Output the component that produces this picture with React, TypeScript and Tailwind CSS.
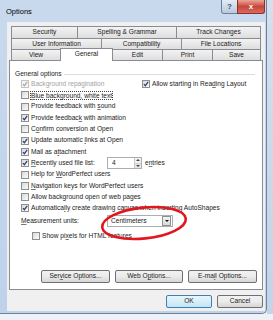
import React from "react";

function Check({ checked, disabled }: { checked?: boolean; disabled?: boolean }) {
  return (
    <span
      className={`flex h-[8px] w-[8px] shrink-0 items-center justify-center border ${
        disabled
          ? "border-[#c4c4c4] bg-[#f4f4f4]"
          : "border-[#8e8f8f] bg-gradient-to-br from-[#d9d9d9] to-[#fbfbfb]"
      }`}
    >
      {checked && (
        <svg viewBox="0 0 6 6" className="h-[6px] w-[6px]">
          <path
            d="M0.9 3.1 L2.4 4.7 L5.2 0.9"
            fill="none"
            stroke={disabled ? "#a8a8a8" : "#2b3d7a"}
            strokeWidth="1.2"
          />
        </svg>
      )}
    </span>
  );
}

function Row({
  checked,
  disabled,
  children,
}: {
  checked?: boolean;
  disabled?: boolean;
  children: React.ReactNode;
}) {
  return (
    <div className="flex h-[11.3px] items-center">
      <Check checked={checked} disabled={disabled} />
      <span className={`ml-[2px] whitespace-nowrap ${disabled ? "text-[#a3a3a3]" : ""}`}>
        {children}
      </span>
    </div>
  );
}

// access-key letter
function K({ children }: { children: React.ReactNode }) {
  return <span className="underline decoration-[#777]">{children}</span>;
}

function Tab({ w, label }: { w: string; label: string }) {
  return (
    <div
      className={`${w} -ml-px flex h-full items-center justify-center border border-[#898c95] bg-gradient-to-b from-[#f3f3f3] to-[#dedede] first:ml-0`}
    >
      {label}
    </div>
  );
}

function Btn({ w, children, primary }: { w: string; children: React.ReactNode; primary?: boolean }) {
  return (
    <div
      className={`${w} flex h-[13px] items-center justify-center rounded-[2px] border ${
        primary
          ? "border-[#3c7fb1] bg-gradient-to-b from-[#eaf6fd] to-[#c4e5f6]"
          : "border-[#707070] bg-gradient-to-b from-[#f2f2f2] via-[#ebebeb] to-[#d6d6d6]"
      }`}
    >
      {children}
    </div>
  );
}

export default function App() {
  return (
    <div className="relative flex h-[320px] w-[273px] overflow-hidden bg-[#eef2f6] font-['Liberation_Sans',Arial,sans-serif] text-[6.6px] leading-none text-[#222]">
      {/* Dialog window */}
      <div className="flex h-[314px] w-[267px] shrink-0 flex-col rounded-br-[5px] border-r border-b border-[#71839a] bg-gradient-to-b from-[#c9d9ed] to-[#bed2ea] pb-[2px]">
        {/* Title bar */}
        <div className="flex h-[22px] shrink-0 items-start">
          <span className="pl-[6px] pt-[8px] text-[7.5px] text-black">Options</span>
          <div className="ml-auto mr-[1px] flex">
            <div className="flex h-[14px] w-[17px] items-center justify-center rounded-bl-[3px] border border-t-0 border-[#6f8098] bg-gradient-to-b from-[#e4ecf5] to-[#b8cadf] text-[8px] font-bold text-[#3d4f68]">
              ?
            </div>
            <div className="-ml-px flex h-[14px] w-[28px] items-center justify-center rounded-br-[3px] border border-t-0 border-[#8b3129] bg-gradient-to-b from-[#e9a598] via-[#c8463b] to-[#d66b5d] text-[8px] font-bold text-white">
              x
            </div>
          </div>
        </div>

        {/* Client area */}
        <div className="flex flex-1 flex-col pl-[7px] pr-[1px]">
          <div className="flex flex-1 flex-col bg-[#f0f0f0] pt-[4px] pb-[3px]">
            {/* Tabs */}
            <div className="pl-[4px]">
              <div className="flex h-[13px]">
                <Tab w="w-[67px]" label="Security" />
                <Tab w="w-[100px]" label="Spelling & Grammar" />
                <Tab w="w-[85px]" label="Track Changes" />
              </div>
              <div className="-mt-px flex h-[12px]">
                <Tab w="w-[91px]" label="User Information" />
                <Tab w="w-[81px]" label="Compatibility" />
                <Tab w="w-[80px]" label="File Locations" />
              </div>
              <div className="relative z-10 -mt-px -mb-px flex h-[12px] items-start">
                <Tab w="w-[50px]" label="View" />
                <div className="-mt-px -ml-px flex h-[13px] w-[53px] items-center justify-center border border-b-0 border-[#898c95] bg-white pb-[1px]">
                  General
                </div>
                <Tab w="w-[51px]" label="Edit" />
                <Tab w="w-[51px]" label="Print" />
                <Tab w="w-[49px]" label="Save" />
              </div>
            </div>

            {/* Panel */}
            <div className="mx-[2px] flex h-[230px] flex-col border border-[#898c95] bg-white">
              <div className="mt-[8.5px] flex h-[9px] items-center pl-[5px] pr-[7px]">
                <span className="whitespace-nowrap">General options</span>
                <div className="ml-[2px] h-px flex-1 bg-[#d5dfe5]" />
              </div>

              <div className="pl-[11px]">
                <div className="flex h-[11.3px] items-center">
                  <div className="flex w-[121px] items-center">
                    <Check checked disabled />
                    <span className="ml-[2px] whitespace-nowrap text-[#a3a3a3]">Background repagination</span>
                  </div>
                  <Check checked />
                  <span className="ml-[2px] whitespace-nowrap">
                    Allow starting in Rea<K>d</K>ing Layout
                  </span>
                </div>
                <div className="flex h-[11.3px] items-center">
                  <Check />
                  <span className="ml-px whitespace-nowrap border border-dotted border-[#444] leading-[7px]">
                    <K>B</K>lue background, white text
                  </span>
                </div>
                <Row>
                  Provide feedback with <K>s</K>ound
                </Row>
                <Row checked>
                  Provide feedbac<K>k</K> with animation
                </Row>
                <Row>
                  C<K>o</K>nfirm conversion at Open
                </Row>
                <Row checked>
                  Update automatic <K>l</K>inks at Open
                </Row>
                <Row checked>
                  Mail as a<K>t</K>tachment
                </Row>
                <div className="flex h-[11.3px] items-center">
                  <div className="flex w-[86px] items-center">
                    <Check checked />
                    <span className="ml-[2px] whitespace-nowrap">
                      <K>R</K>ecently used file list:
                    </span>
                  </div>
                  <div className="flex h-[12px] w-[35px] shrink-0 items-center border border-[#abadb3] bg-white">
                    <span className="flex-1 pl-[4px]">4</span>
                    <div className="flex h-full w-[7px] flex-col border-l border-[#c8c8c8]">
                      <div className="flex flex-1 items-center justify-center bg-[#f1f1f1]">
                        <svg viewBox="0 0 4 2" className="h-[2px] w-[4px]">
                          <path d="M0 2 L2 0 L4 2 Z" fill="#444" />
                        </svg>
                      </div>
                      <div className="flex flex-1 items-center justify-center border-t border-[#d0d0d0] bg-[#e6e6e6]">
                        <svg viewBox="0 0 4 2" className="h-[2px] w-[4px]">
                          <path d="M0 0 L2 2 L4 0 Z" fill="#444" />
                        </svg>
                      </div>
                    </div>
                  </div>
                  <span className="ml-[3px] whitespace-nowrap">
                    e<K>n</K>tries
                  </span>
                </div>
                <Row>
                  Help for <K>W</K>ordPerfect users
                </Row>
                <Row>
                  <K>N</K>avigation keys for WordPerfect users
                </Row>
                <Row>Allow background open of web pages</Row>
                <Row checked>
                  Automatica<K>l</K>ly create drawing canvas when inserting AutoShapes
                </Row>

                <div className="mt-[1.4px] flex h-[12px] items-center">
                  <span className="w-[86px] whitespace-nowrap">
                    <K>M</K>easurement units:
                  </span>
                  <div className="flex h-[12px] w-[66px] items-center border border-[#abadb3] bg-white">
                    <span className="flex-1 pl-[3px]">Centimeters</span>
                    <div className="mr-px flex h-[10px] w-[9px] items-center justify-center border border-[#8e8f8f] bg-gradient-to-b from-[#f4f4f4] to-[#d9d9d9]">
                      <svg viewBox="0 0 4 2" className="h-[2px] w-[4px]">
                        <path d="M0 0 L2 2 L4 0 Z" fill="#111" />
                      </svg>
                    </div>
                  </div>
                </div>

                <div className="mt-[2.8px] flex h-[11.3px] items-center pl-[11px]">
                  <Check />
                  <span className="ml-[2px] whitespace-nowrap">
                    Show pi<K>x</K>els for HTML features
                  </span>
                </div>
              </div>

              <div className="mt-auto flex justify-end gap-[5px] pr-[5px] pb-[6px]">
                <Btn w="w-[69px]">
                  Ser<K>v</K>ice Options...
                </Btn>
                <Btn w="w-[68px]">
                  Web O<K>p</K>tions...
                </Btn>
                <Btn w="w-[69px]">
                  E-ma<K>i</K>l Options...
                </Btn>
              </div>
            </div>

            {/* OK / Cancel */}
            <div className="mt-[5px] flex justify-end gap-[5px] pr-[2px]">
              <Btn w="w-[46px]" primary>
                OK
              </Btn>
              <Btn w="w-[46px]">Cancel</Btn>
            </div>
          </div>
        </div>
      </div>

      {/* Word window behind, on the right */}
      <div className="h-[314px] w-[6px] bg-gradient-to-b from-[#d3e0ee] to-[#c2d4e9]" />

      {/* Red hand-drawn ellipse over the measurement units */}
      <svg className="absolute left-[98px] top-[202px] h-[42px] w-[92px]" viewBox="0 0 92 42">
        <ellipse
          cx="46"
          cy="21"
          rx="42"
          ry="15.5"
          transform="rotate(-6 46 21)"
          fill="none"
          stroke="#e3161f"
          strokeWidth="2.6"
        />
      </svg>
    </div>
  );
}
